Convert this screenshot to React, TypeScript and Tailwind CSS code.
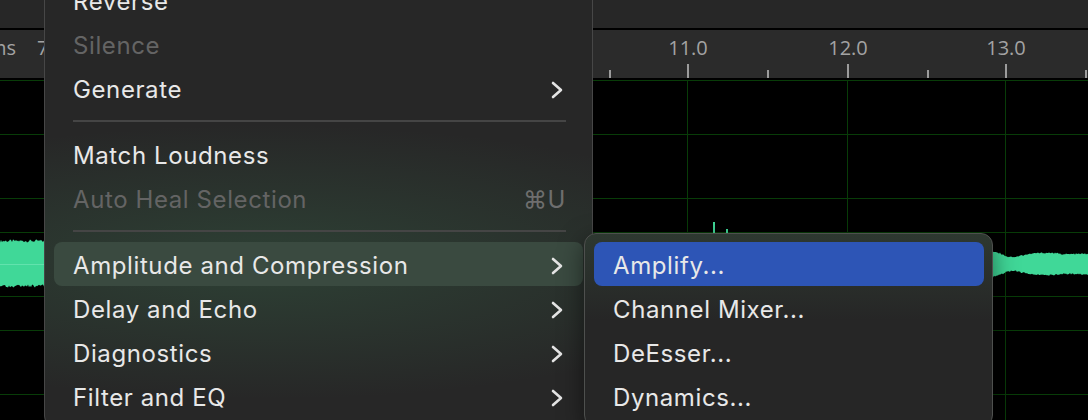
import React from 'react';

const FONT = "font-['Inter','DejaVu_Sans',sans-serif]";

// --- Waveform helpers ---
const noise = (i: number) => {
  const s = Math.sin(i * 12.9898) * 43758.5453;
  return s - Math.floor(s);
};

const lerpEnv = (pts: [number, number][], x: number) => {
  for (let i = 0; i < pts.length - 1; i++) {
    const [x0, a0] = pts[i];
    const [x1, a1] = pts[i + 1];
    if (x >= x0 && x <= x1) return a0 + ((a1 - a0) * (x - x0)) / (x1 - x0);
  }
  return pts[pts.length - 1][1];
};

const bandPath = (x0: number, x1: number, cy: number, env: [number, number][], jag: number) => {
  const top: string[] = [];
  const bottom: string[] = [];
  for (let x = x0; x <= x1; x++) {
    const a = lerpEnv(env, x);
    top.push(`${x},${(cy - a - noise(x) * jag).toFixed(1)}`);
    bottom.unshift(`${x},${(cy + a + noise(x + 500) * jag).toFixed(1)}`);
  }
  return `M${top.join(' L')} L${bottom.join(' L')} Z`;
};

// --- Ruler ---
const majors = [
  { x: 687, label: '11.0' },
  { x: 847, label: '12.0' },
  { x: 1005, label: '13.0' },
];
const minors = [609, 767, 927, 1085];

const Ruler: React.FC = () => (
  <div className="relative h-[48px] bg-[#2b2b2b] font-['Open_Sans',sans-serif] text-[20px] text-[#a3a3a3]">
    <span className="absolute left-[-12px] top-[8px] leading-none">ms</span>
    <span className="absolute left-[37px] top-[8px] leading-none">7</span>
    {majors.map((m) => (
      <span key={m.label} className="absolute top-[8px] w-[60px] -translate-x-1/2 text-center leading-none" style={{ left: m.x + 1 }}>
        {m.label}
      </span>
    ))}
    <svg className="absolute inset-0" width="1088" height="48">
      {majors.map((m) => (
        <rect key={m.x} x={m.x} y={34} width={2} height={14} fill="#9c9c9c" />
      ))}
      {minors.map((x) => (
        <rect key={x} x={x} y={40} width={2} height={8} fill="#9c9c9c" />
      ))}
    </svg>
  </div>
);

// --- Waveform canvas (page y offset 80) ---
const Waveform: React.FC = () => {
  const hLines = [0.5, 54.5, 118.5, 152.5, 216.5, 250.5, 314.5];
  const vLines = [687.5, 847.5, 1005.5];
  const left = bandPath(0, 50, 183.5, [[0, 21], [50, 21]], 3);
  const right = bandPath(993, 1088, 184, [
    [993, 12], [1000, 10], [1008, 6.5], [1016, 6.5], [1025, 8.5], [1035, 10], [1050, 10.5], [1065, 9], [1088, 9.5],
  ], 1.5);
  return (
    <svg className="block" width="1088" height="340">
      <rect width="1088" height="340" fill="#000" />
      {hLines.map((y) => (
        <line key={y} x1={0} x2={1088} y1={y} y2={y} stroke="#083c08" strokeWidth={1} />
      ))}
      {vLines.map((x) => (
        <line key={x} x1={x} x2={x} y1={0} y2={340} stroke="#083c08" strokeWidth={1} />
      ))}
      <path d={left} fill="#40d898" />
      <path d={right} fill="#40d898" />
      <line x1={0} x2={50} y1={184.5} y2={184.5} stroke="#62e2ad" strokeWidth={1} />
      <rect x={713} y={142} width={2} height={12} fill="#40d898" />
      <rect x={726} y={149} width={2} height={5} fill="#40d898" />
    </svg>
  );
};

// --- Menus ---
const Chevron: React.FC = () => (
  <svg width="12" height="18" viewBox="0 0 12 18" fill="none">
    <path d="M2 2 L10 9 L2 16" stroke="#e4e4e4" strokeWidth={2.6} strokeLinecap="round" strokeLinejoin="round" />
  </svg>
);

type Item = { label: string; disabled?: boolean; sub?: boolean; shortcut?: string; active?: boolean };

const MenuRow: React.FC<{ item: Item; tone?: 'green' | 'blue' }> = ({ item, tone }) => (
  <div
    className={`flex h-[44px] items-center justify-between rounded-[8px] pt-[3px] pl-[19px] pr-[20px] ${
      item.active ? (tone === 'blue' ? 'bg-[#2d55b6]' : 'bg-[#3a4a40]') : ''
    } ${item.disabled ? 'text-[#646464]' : 'text-[#e8e8e8]'}`}
  >
    <span className="whitespace-nowrap">{item.label}</span>
    {item.sub && <Chevron />}
    {item.shortcut && <span className="mr-[-3px] text-[#6e6e6e]">{item.shortcut}</span>}
  </div>
);

const Separator: React.FC = () => (
  <div className="h-[22px] pt-[10px] pl-[19px] pr-[17px]">
    <div className="h-[2px] bg-[#454545]" />
  </div>
);

const MainMenu: React.FC = () => (
  <div className="absolute left-[44px] top-[-32px] w-[549px] rounded-[12px] border border-[#474747] bg-[#272727] bg-[radial-gradient(ellipse_95%_30%_at_40%_64%,rgba(62,130,88,0.28),transparent)] px-[9px] py-[9px] text-[24px] tracking-[0.6px]">
    <MenuRow item={{ label: 'Reverse' }} />
    <MenuRow item={{ label: 'Silence', disabled: true }} />
    <MenuRow item={{ label: 'Generate', sub: true }} />
    <Separator />
    <MenuRow item={{ label: 'Match Loudness' }} />
    <MenuRow item={{ label: 'Auto Heal Selection', disabled: true, shortcut: '⌘U' }} />
    <Separator />
    <MenuRow item={{ label: 'Amplitude and Compression', sub: true, active: true }} />
    <MenuRow item={{ label: 'Delay and Echo', sub: true }} />
    <MenuRow item={{ label: 'Diagnostics', sub: true }} />
    <MenuRow item={{ label: 'Filter and EQ', sub: true }} />
  </div>
);

const SubMenu: React.FC = () => (
  <div className="absolute left-[584px] top-[233px] w-[409px] rounded-[12px] border border-[#4e504e] bg-[#262626] bg-[linear-gradient(180deg,rgba(60,90,68,0.35),transparent_45%)] pb-[8px] pl-[9px] pr-[8px] pt-[8px] text-[24px] tracking-[0.6px] shadow-[0_8px_24px_rgba(0,0,0,0.5)]">
    <MenuRow item={{ label: 'Amplify...', active: true }} tone="blue" />
    <MenuRow item={{ label: 'Channel Mixer...' }} />
    <MenuRow item={{ label: 'DeEsser...' }} />
    <MenuRow item={{ label: 'Dynamics...' }} />
  </div>
);

const App: React.FC = () => (
  <div className={`relative flex h-[420px] w-[1088px] flex-col overflow-hidden bg-black ${FONT}`}>
    <div className="h-[28px] bg-[#272727]" />
    <div className="h-[2px] bg-black" />
    <Ruler />
    <div className="h-[2px] bg-black" />
    <Waveform />
    <MainMenu />
    <SubMenu />
  </div>
);

export default App;
